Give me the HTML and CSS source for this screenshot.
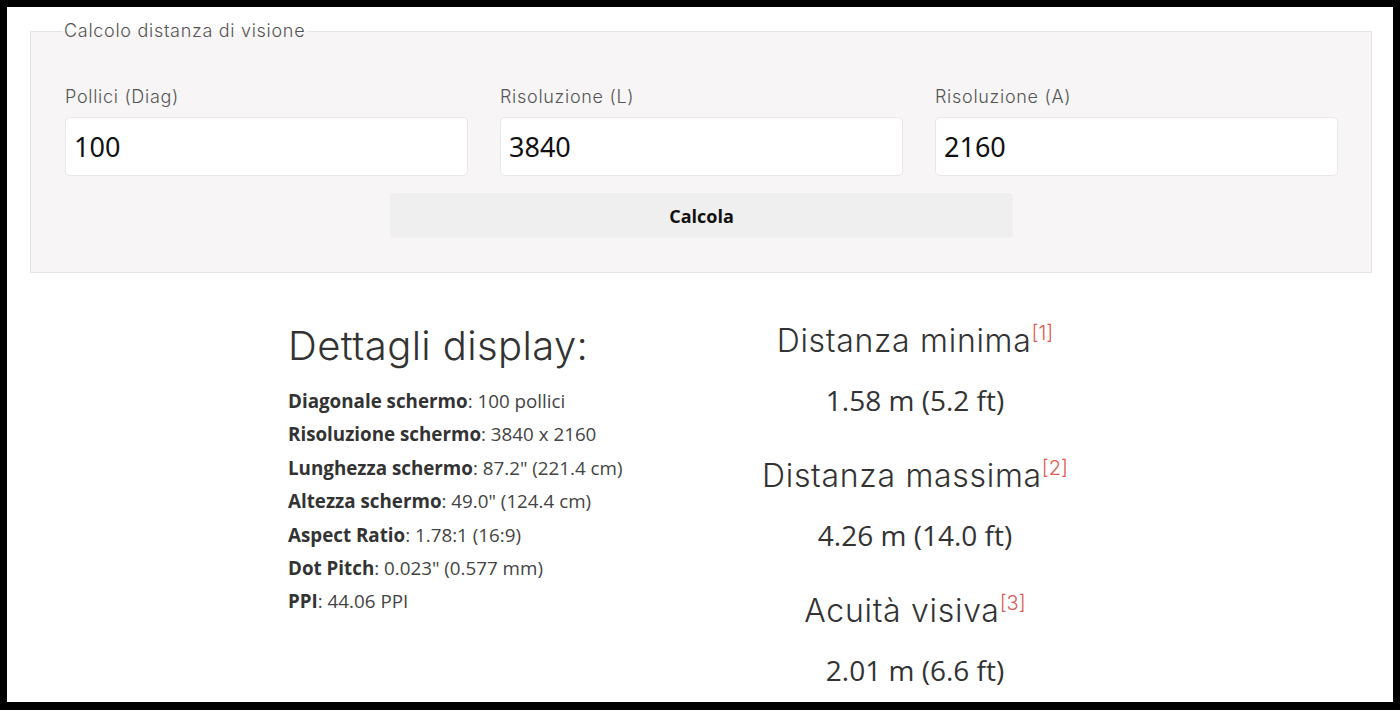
FILE: index.html
```html
<!DOCTYPE html>
<html lang="it">
<head>
<meta charset="utf-8">
<title>Calcolo distanza di visione</title>
<link rel="stylesheet" href="styles.css">
</head>
<body>
<div class="frame">
  <fieldset class="calc">
    <legend class="calc-legend">Calcolo distanza di visione</legend>
    <div class="fields">
      <div class="field">
        <label class="field-label">Pollici (Diag)</label>
        <input class="field-input" type="text" value="100">
      </div>
      <div class="field">
        <label class="field-label">Risoluzione (L)</label>
        <input class="field-input" type="text" value="3840">
      </div>
      <div class="field">
        <label class="field-label">Risoluzione (A)</label>
        <input class="field-input" type="text" value="2160">
      </div>
    </div>
    <div class="actions">
      <button class="calc-button" type="button">Calcola</button>
    </div>
  </fieldset>

  <section class="results">
    <div class="details">
      <h2 class="details-title">Dettagli display:</h2>
      <div class="detail"><b>Diagonale schermo</b>: 100 pollici</div>
      <div class="detail"><b>Risoluzione schermo</b>: 3840 x 2160</div>
      <div class="detail"><b>Lunghezza schermo</b>: 87.2" (221.4 cm)</div>
      <div class="detail"><b>Altezza schermo</b>: 49.0" (124.4 cm)</div>
      <div class="detail"><b>Aspect Ratio</b>: 1.78:1 (16:9)</div>
      <div class="detail"><b>Dot Pitch</b>: 0.023" (0.577 mm)</div>
      <div class="detail"><b>PPI</b>: 44.06 PPI</div>
    </div>
    <div class="distances">
      <h3 class="dist-title">Distanza minima<sup class="ref">[1]</sup></h3>
      <div class="dist-value">1.58 m (5.2 ft)</div>
      <h3 class="dist-title">Distanza massima<sup class="ref">[2]</sup></h3>
      <div class="dist-value">4.26 m (14.0 ft)</div>
      <h3 class="dist-title">Acuità visiva<sup class="ref">[3]</sup></h3>
      <div class="dist-value">2.01 m (6.6 ft)</div>
    </div>
  </section>
</div>
</body>
</html>
```
FILE: styles.css
```css
* { box-sizing: border-box; }

html, body {
  margin: 0;
  padding: 0;
  background: #000;
}

.frame {
  width: 1400px;
  height: 710px;
  border: 7px solid #000;
  border-bottom-width: 8px;
  background: #fff;
  overflow: hidden;
  padding: 14px 21px 0 23px;
  font-family: "Open Sans", "Noto Sans", sans-serif;
  color: #333;
}

.calc {
  margin: 0;
  border: 1px solid #e6e4e4;
  background: #f7f5f5;
  padding: 46px 33px 34px 34px;
  min-width: 0;
}

.calc-legend {
  font-family: Inter, "DejaVu Sans", sans-serif;
  font-weight: 300;
  font-size: 18px;
  letter-spacing: 0.7px;
  line-height: 20px;
  color: #555;
  padding: 0 2px;
  margin-left: -3px;
}

.fields {
  display: grid;
  grid-template-columns: repeat(3, 1fr);
  column-gap: 32px;
}

.field {
  display: flex;
  flex-direction: column;
}

.field-label {
  font-family: Inter, "DejaVu Sans", sans-serif;
  font-weight: 300;
  font-size: 18px;
  letter-spacing: 0.7px;
  line-height: 20px;
  color: #555;
  margin-bottom: 10px;
}

.field-input {
  height: 59px;
  border: 1px solid #e9e7e7;
  border-radius: 5px;
  background: #fff;
  padding: 0 8px;
  font-family: "Noto Sans", "Open Sans", sans-serif;
  font-size: 27px;
  color: #111;
  outline: none;
}

.actions {
  display: flex;
  justify-content: center;
  margin-top: 17px;
}

.calc-button {
  width: 623px;
  height: 45px;
  border: none;
  border-radius: 4px;
  background: #efefef;
  font-family: "Open Sans", "Noto Sans", sans-serif;
  font-weight: 700;
  font-size: 18px;
  color: #111;
}

.results {
  width: 856px;
  margin: 0 auto;
  padding-top: 49px;
  display: grid;
  grid-template-columns: 1fr 1fr;
}

.details {
  padding-left: 15px;
}

.details-title {
  margin: 0 0 15px;
  font-family: Inter, "DejaVu Sans", sans-serif;
  font-weight: 300;
  font-size: 40px;
  letter-spacing: 0.4px;
  line-height: 48px;
  color: #333;
}

.detail {
  font-size: 18.8px;
  line-height: 33.4px;
  color: #444;
  white-space: nowrap;
}

.detail b {
  font-weight: 700;
  color: #333;
}

.distances {
  text-align: center;
}

.dist-title {
  margin: 0 0 22px;
  font-family: Inter, "DejaVu Sans", sans-serif;
  font-weight: 300;
  font-size: 32px;
  letter-spacing: 0.7px;
  line-height: 38px;
  color: #333;
}

.ref {
  font-size: 20px;
  letter-spacing: 0;
  line-height: 0;
  color: #dd5a52;
  vertical-align: 12px;
}

.dist-value {
  font-size: 28px;
  line-height: 36px;
  margin-bottom: 39px;
  color: #333;
}
```
